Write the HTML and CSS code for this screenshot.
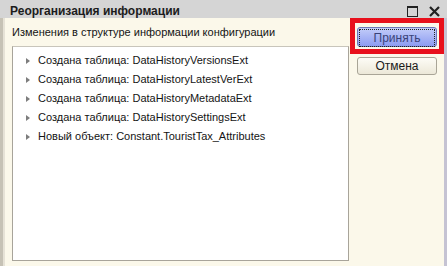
FILE: index.html
```html
<!DOCTYPE html>
<html lang="ru">
<head>
  <meta charset="UTF-8" />
  <title>Реорганизация информации</title>
  <link rel="stylesheet" href="styles.css">
</head>
<body>
  <div class="window">
    <div class="titlebar">
      <span class="title">Реорганизация информации</span>
      <div class="title-btns">
        <span class="btn-max"></span>
        <svg class="btn-close" width="11" height="11" viewBox="0 0 11 11">
          <path d="M1 1 L10 10 M10 1 L1 10" stroke="#222" stroke-width="2.2" fill="none"/>
        </svg>
      </div>
    </div>

    <div class="content">
      <div class="main">
        <div class="caption">Изменения в структуре информации конфигурации</div>
        <ul class="tree">
          <li><span class="arrow"></span>Создана таблица: DataHistoryVersionsExt</li>
          <li><span class="arrow"></span>Создана таблица: DataHistoryLatestVerExt</li>
          <li><span class="arrow"></span>Создана таблица: DataHistoryMetadataExt</li>
          <li><span class="arrow"></span>Создана таблица: DataHistorySettingsExt</li>
          <li><span class="arrow"></span>Новый объект: Constant.TouristTax_Attributes</li>
        </ul>
      </div>

      <div class="side">
        <div class="highlight">
          <button class="btn btn-ok"><span class="focus">Принять</span></button>
        </div>
        <button class="btn btn-cancel">Отмена</button>
      </div>
    </div>
  </div>
</body>
</html>
```

FILE: styles.css
```css
body {
  margin: 0;
  font-family: "Liberation Sans", Arial, sans-serif;
  font-size: 11px;
  color: #141414;
  background: #fbf8ea;
}

.window {
  width: 447px;
  height: 266px;
  display: flex;
  flex-direction: column;
  overflow: hidden;
}

.titlebar {
  height: 18px;
  background: #d5d5d5;
  display: flex;
  justify-content: space-between;
  align-items: center;
  padding: 0 7px 0 10px;
}

.title {
  font-weight: bold;
  font-size: 12px;
  color: #1c1c1c;
  padding-top: 3px;
}

.title-btns {
  display: flex;
  align-items: center;
  gap: 11px;
  padding-top: 4px;
}

.btn-max {
  width: 9px;
  height: 8px;
  border: 1px solid #222;
  border-top-width: 2px;
}

.content {
  flex: 1;
  display: flex;
  background: #fbf8ea;
  border-left: 3px solid #c6c2b5;
  border-right: 3px solid #c5c3d3;
  box-shadow: inset 2px 0 0 #e6e2d6;
}

.main {
  width: 337px;
  padding: 0 0 5px 9px;
  display: flex;
  flex-direction: column;
}

.caption {
  height: 28px;
  line-height: 29px;
}

.tree {
  flex: 1;
  list-style: none;
  margin: 0;
  padding: 4px 0 0 0;
  background: #fff;
  border: 1px solid #a8a49a;
  border-top-color: #c8c5bb;
}

.tree li {
  height: 19px;
  line-height: 19px;
  display: flex;
  align-items: center;
  white-space: nowrap;
}

.arrow {
  width: 0;
  height: 0;
  margin: 0 8px 0 13px;
  border-top: 3px solid transparent;
  border-bottom: 3px solid transparent;
  border-left: 4px solid #7d7d7d;
}

.side {
  width: 94px;
  display: flex;
  flex-direction: column;
  margin-left: 1px;
}

.highlight {
  border: 5px solid #e8101c;
  padding: 4px 1px 1px 2px;
  height: 21px;
}

.btn {
  font-family: "Liberation Sans", Arial, sans-serif;
  font-size: 12px;
  width: 80px;
  height: 20px;
  padding: 0;
  border-radius: 3px;
  color: #1a1a1a;
}

.btn-ok {
  border: 1px solid #6d78b8;
  background: linear-gradient(#c3cdf9, #8d9cf1);
  color: #3a4378;
  padding: 1px;
}

.focus {
  display: block;
  height: 16px;
  line-height: 16px;
  border: 1px dotted #222;
}

.btn-cancel {
  margin: 3px 0 0 7px;
  height: 18px;
  border: 1px solid #a9a597;
  background: linear-gradient(#fdfcf6, #ece8d8);
}
```
